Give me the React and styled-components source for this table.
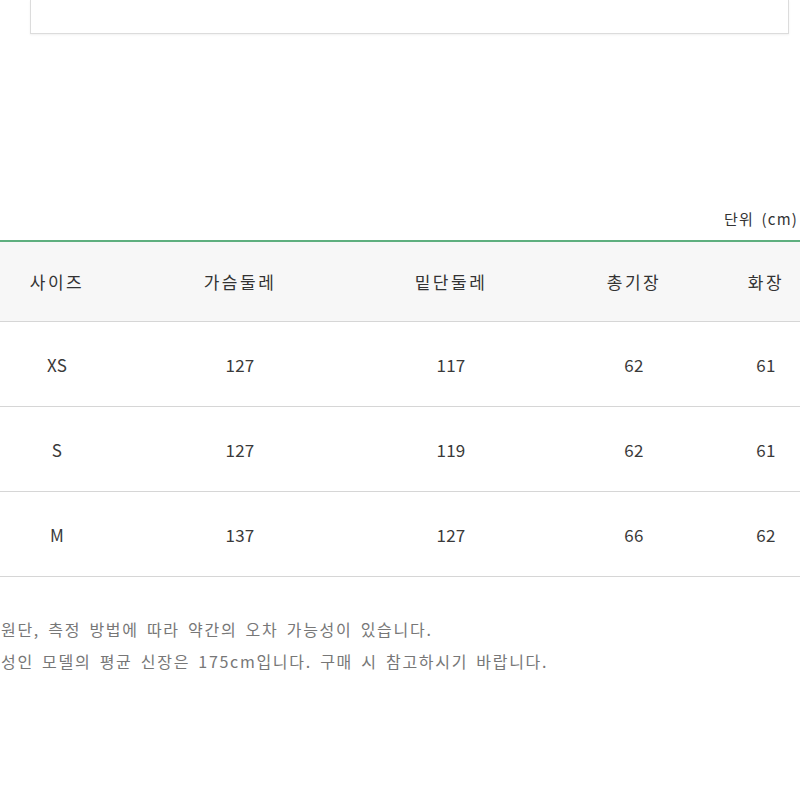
import React from "react";
import styled, { createGlobalStyle } from "styled-components";

const GlobalStyle = createGlobalStyle`
  html, body {
    margin: 0;
    padding: 0;
    background: #fff;
  }
  body {
    font-family: "Noto Sans CJK KR", "Noto Sans", sans-serif;
    color: #333;
  }
`;

const Page = styled.div`
  width: 800px;
  overflow: hidden;
`;

const TopBox = styled.div`
  height: 33px;
  margin: 0 11px 0 30px;
  border: 1px solid #dcdcdc;
  border-top: none;
  box-shadow: 0 1px 2px rgba(0, 0, 0, 0.06);
`;

const Unit = styled.div`
  margin-top: 174px;
  height: 22px;
  padding-right: 2px;
  text-align: right;
  font-size: 15px;
  line-height: 22px;
  letter-spacing: 1.2px;
  word-spacing: 3px;
  color: #333;
`;

const Table = styled.div`
  margin-top: 10px;
  border-top: 2px solid #5eaf7f;
`;

const Row = styled.div`
  display: grid;
  grid-template-columns: 114px 252px 170px 196px 68px;
  height: ${({ $head }) => ($head ? "79px" : "84px")};
  background: ${({ $head }) => ($head ? "#f7f7f7" : "#fff")};
  border-bottom: 1px solid #d6d6d6;
  align-items: center;
`;

const Cell = styled.div`
  text-align: center;
  font-size: 17px;
  color: ${({ $head }) => ($head ? "#333" : "#3a3a3a")};
  letter-spacing: ${({ $head }) => ($head ? "2.5px" : "0.3px")};
`;

const Notes = styled.div`
  margin-top: 36px;
  padding-left: 1px;
  font-size: 16px;
  line-height: 32px;
  letter-spacing: 1.7px;
  word-spacing: 3px;
  color: #777;
  white-space: nowrap;
`;

const head = ["사이즈", "가슴둘레", "밑단둘레", "총기장", "화장"];
const rows = [
  ["XS", "127", "117", "62", "61"],
  ["S", "127", "119", "62", "61"],
  ["M", "137", "127", "66", "62"],
];

export default function App() {
  return (
    <Page>
      <GlobalStyle />
      <TopBox />
      <Unit>단위 (cm)</Unit>
      <Table>
        <Row $head>
          {head.map((h) => (
            <Cell key={h} $head>
              {h}
            </Cell>
          ))}
        </Row>
        {rows.map((r) => (
          <Row key={r[0]}>
            {r.map((v, i) => (
              <Cell key={i}>{v}</Cell>
            ))}
          </Row>
        ))}
      </Table>
      <Notes>
        <div>원단, 측정 방법에 따라 약간의 오차 가능성이 있습니다.</div>
        <div>성인 모델의 평균 신장은 175cm입니다. 구매 시 참고하시기 바랍니다.</div>
      </Notes>
    </Page>
  );
}
